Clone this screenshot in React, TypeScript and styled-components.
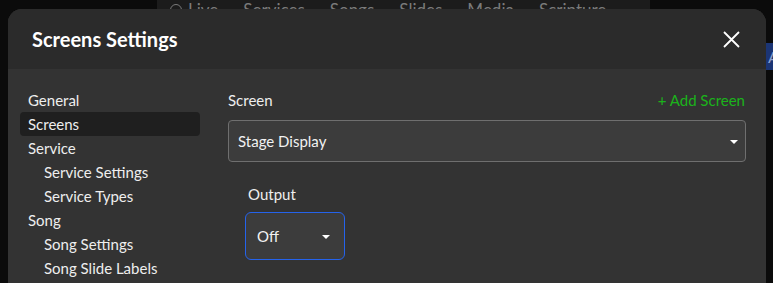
import React from 'react'
import styled, { createGlobalStyle } from 'styled-components'

const GlobalStyle = createGlobalStyle`
  html, body {
    margin: 0;
    padding: 0;
    background: #0b0b0b;
    overflow: hidden;
  }
  body {
    font-family: Lato, "Noto Sans", sans-serif;
    color: #eeeeee;
  }
`;

const Page = styled.div`
  position: relative;
  width: 773px;
  height: 283px;
  overflow: hidden;
  background: #0b0b0b;
`;

const AppNav = styled.div`
  display: flex;
  align-items: flex-end;
  gap: 25px;
  margin-left: 157px;
  width: 493px;
  height: 10px;
  padding-left: 13px;
  box-sizing: border-box;
  background: #1c1c1c;
  overflow: hidden;
`;

const NavItem = styled.span`
  display: flex;
  align-items: center;
  gap: 6px;
  font-size: 17px;
  line-height: 18px;
  color: #7a7a7a;
  margin-bottom: -9px;
  white-space: nowrap;
`;

const NavDot = styled.span`
  width: 10px;
  height: 10px;
  border: 1.5px solid #7a7a7a;
  border-radius: 50%;
`;

const SideButton = styled.div`
  position: absolute;
  left: 764px;
  top: 43px;
  width: 30px;
  height: 27px;
  background: #1b3575;
  color: #8aa0d0;
  font-size: 16px;
  line-height: 27px;
  padding-left: 4px;
`;

const Modal = styled.div`
  position: absolute;
  left: 8px;
  top: 9px;
  width: 758px;
  height: 300px;
  border-radius: 14px;
  overflow: hidden;
  background: #333333;
  display: flex;
  flex-direction: column;
`;

const Header = styled.div`
  height: 60px;
  flex: none;
  display: flex;
  align-items: center;
  justify-content: space-between;
  padding: 0 26px 0 24px;
  background: #2b2b2b;
`;

const Title = styled.h2`
  margin: 0;
  font-size: 20px;
  font-weight: 700;
  color: #ffffff;
`;

const CloseButton = styled.button`
  background: none;
  border: none;
  padding: 0;
  width: 18px;
  height: 18px;
  display: flex;
  align-items: center;
  justify-content: center;
  cursor: pointer;
`;

const Body = styled.div`
  display: flex;
  gap: 28px;
  padding: 19px 20px 0 12px;
`;

const Sidebar = styled.nav`
  width: 180px;
  flex: none;
  display: flex;
  flex-direction: column;
`;

const SideItem = styled.div<{ $active?: boolean; $sub?: boolean }>`
  height: 24px;
  display: flex;
  align-items: center;
  padding-left: ${({ $sub }) => ($sub ? '24px' : '8px')};
  border-radius: 4px;
  font-size: 15px;
  color: #eeeeee;
  background: ${({ $active }) => ($active ? '#1f1f1f' : 'transparent')};
`;

const Main = styled.div`
  flex: 1;
  display: flex;
  flex-direction: column;
`;

const FieldHeader = styled.div`
  height: 24px;
  display: flex;
  align-items: center;
  justify-content: space-between;
  margin-bottom: 8px;
`;

const Label = styled.span`
  font-size: 15px;
  color: #eeeeee;
`;

const AddLink = styled.span`
  font-size: 15px;
  color: #1bb31b;
  margin-right: 1px;
`;

const Select = styled.div<{ $focused?: boolean; $width?: string; $height?: string }>`
  display: flex;
  align-items: center;
  justify-content: space-between;
  box-sizing: border-box;
  width: ${({ $width }) => $width ?? '100%'};
  height: ${({ $height }) => $height ?? '42px'};
  padding: 0 ${({ $focused }) => ($focused ? '14px 0 11px' : '7px 0 9px')};
  background: #3c3c3c;
  border: 1px solid ${({ $focused }) => ($focused ? '#2563eb' : '#6f6f6f')};
  border-radius: ${({ $focused }) => ($focused ? '6px' : '4px')};
  font-size: 15px;
  color: #f2f2f2;
`;

const Caret = styled.span`
  width: 0;
  height: 0;
  border-left: 4px solid transparent;
  border-right: 4px solid transparent;
  border-top: 4px solid #ffffff;
  margin-top: 2px;
`;

const OutputGroup = styled.div`
  display: flex;
  flex-direction: column;
  padding: 20px 0 0 17px;
`;

const OutputLabel = styled(Label)`
  height: 24px;
  display: flex;
  align-items: center;
  padding-left: 3px;
  margin-bottom: 6px;
`;

const navItems = ['Live', 'Services', 'Songs', 'Slides', 'Media', 'Scripture'];

const sideItems: { label: string; sub?: boolean; active?: boolean }[] = [
  { label: 'General' },
  { label: 'Screens', active: true },
  { label: 'Service' },
  { label: 'Service Settings', sub: true },
  { label: 'Service Types', sub: true },
  { label: 'Song' },
  { label: 'Song Settings', sub: true },
  { label: 'Song Slide Labels', sub: true },
];

const App: React.FC = () => {
  return (
    <Page>
      <GlobalStyle />
      <AppNav>
        {navItems.map((item, i) => (
          <NavItem key={item}>
            {i === 0 && <NavDot />}
            {item}
          </NavItem>
        ))}
      </AppNav>
      <SideButton>A</SideButton>

      <Modal>
        <Header>
          <Title>Screens Settings</Title>
          <CloseButton aria-label="Close">
            <svg width="17" height="17" viewBox="0 0 17 17">
              <path d="M1 1 L16 16 M16 1 L1 16" stroke="#ffffff" strokeWidth="1.8" />
            </svg>
          </CloseButton>
        </Header>
        <Body>
          <Sidebar>
            {sideItems.map((s) => (
              <SideItem key={s.label} $sub={s.sub} $active={s.active}>
                {s.label}
              </SideItem>
            ))}
          </Sidebar>
          <Main>
            <FieldHeader>
              <Label>Screen</Label>
              <AddLink>+ Add Screen</AddLink>
            </FieldHeader>
            <Select>
              Stage Display
              <Caret />
            </Select>
            <OutputGroup>
              <OutputLabel>Output</OutputLabel>
              <Select $focused $width="100px" $height="48px">
                Off
                <Caret />
              </Select>
            </OutputGroup>
          </Main>
        </Body>
      </Modal>
    </Page>
  );
};

export default App;
